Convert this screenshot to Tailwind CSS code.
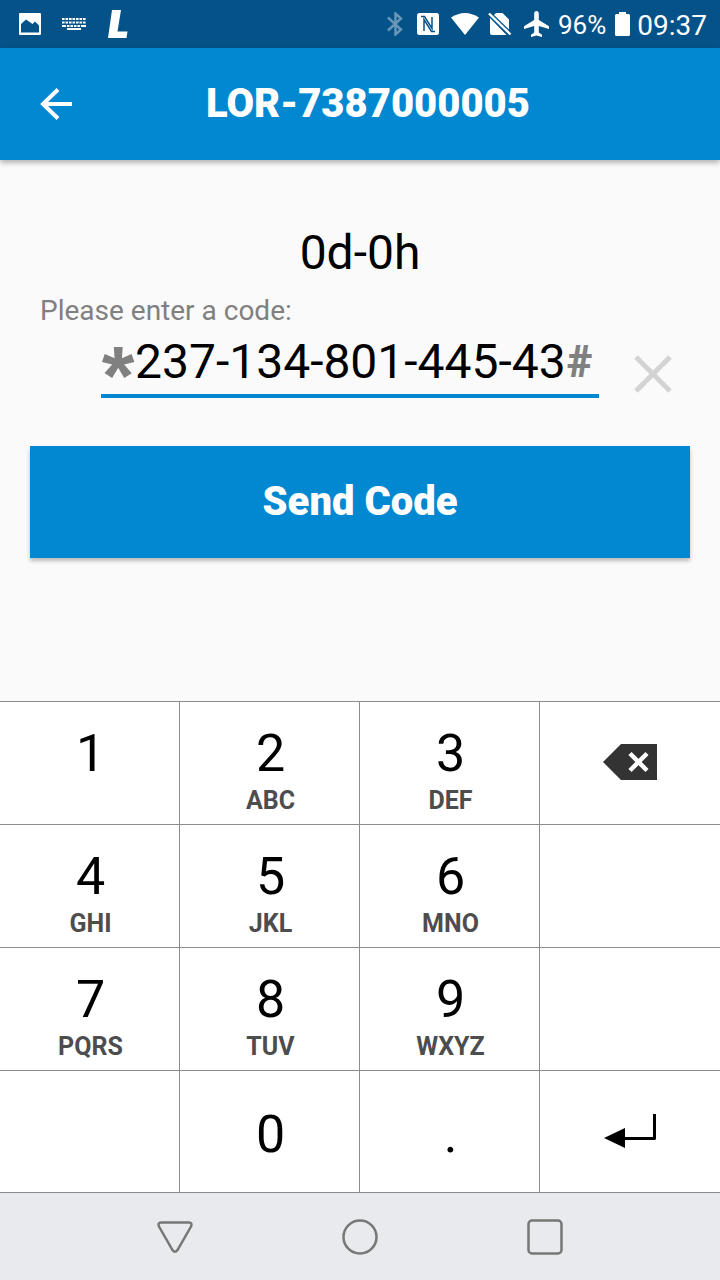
<!DOCTYPE html>
<html lang="en">
<head>
<meta charset="utf-8">
<meta name="viewport" content="width=device-width, initial-scale=1">
<title>LOR-7387000005</title>
<script src="https://cdn.jsdelivr.net/npm/@tailwindcss/browser@4"></script>
</head>
<body class="min-h-screen flex flex-col bg-[#fafafa] font-[Roboto,sans-serif] text-black">
  <div class="h-12 shrink-0 bg-[#055289] text-white flex items-center justify-between pl-[18px] pr-[13px]">
    <div class="flex items-center">
      <svg class="size-6" viewBox="0 0 24 24" fill="currentColor" aria-hidden="true"><path fill-rule="evenodd" d="M2 1h20a1 1 0 0 1 1 1v20a1 1 0 0 1-1 1H2a1 1 0 0 1-1-1V2a1 1 0 0 1 1-1zM3 12v8.500h18v-7l-4-4-2.500 2.500L8 7.500z"/></svg>
      <svg class="ml-5 w-6 h-6" viewBox="0 0 24 24" fill="none" stroke="currentColor" aria-hidden="true"><path stroke-width="2" stroke-dasharray="2.600 .9" d="M0 7h24M0 10.500h24"/><path stroke-width="2" stroke-dasharray="4 .9 2.600 .9 2.600 .9 2.600 .9 2.600 .9 5 0" d="M0 14h24"/><path stroke-width="2" d="M5 17h14"/></svg>
      <svg class="ml-[22px] w-5 h-7" viewBox="0 0 20 28" fill="currentColor" aria-hidden="true"><path d="M4 0h9L9.500 21.500h10L18.500 28H0z"/></svg>
    </div>
    <div class="flex items-center">
      <svg class="w-4 h-6 opacity-40" viewBox="0 0 16 24" fill="none" stroke="currentColor" stroke-width="2.400" aria-hidden="true"><path d="M1 5.500 14 17.500 8.500 22.500V1.500L14 6.500 1 18.500"/></svg>
      <svg class="ml-[14px] w-[22px] h-6" viewBox="0 0 22 24" aria-hidden="true"><rect y="1" width="22" height="22" rx="2.500" fill="currentColor"/><path d="M4 4.500h3.500l7.500 12V5M18 19.500h-3.500L7 7.500V19" fill="none" stroke="#055289" stroke-width="1.500"/></svg>
      <svg class="ml-3 w-7 h-6" viewBox="0 0 28 24" fill="currentColor" aria-hidden="true"><path d="M0 5.500Q14-3.500 28 5.500L14 23z"/></svg>
      <svg class="ml-[9px] w-6 h-6" viewBox="0 0 24 24" fill="currentColor" aria-hidden="true"><path d="M8 1h6.500L21 7.500v10L6 3zM2 6v15a2 2 0 0 0 2 2h14.500z"/><path d="M1 1.500 22.500 22.500" fill="none" stroke="currentColor" stroke-width="2.400"/></svg>
      <svg class="ml-3 w-[25px] h-[26px]" viewBox="0 0 25 26" fill="currentColor" aria-hidden="true"><path d="M12.500 0c1.400 0 2.300 1 2.300 2.400V9L25 15.300V18l-10.200-3v6.500l3.200 2.300V26l-5.500-1.500L7 26v-2.200l3.200-2.300V15L0 18v-2.700L10.200 9V2.400C10.200 1 11.100 0 12.500 0z"/></svg>
      <span class="ml-[9px] pt-[2px] text-[26px] leading-8">96%</span>
      <svg class="ml-[9px] w-[15px] h-6" viewBox="0 0 15 24" fill="currentColor" aria-hidden="true"><path d="M4 0h7v2h2.500A1.500 1.500 0 0 1 15 3.500v19a1.500 1.500 0 0 1-1.500 1.500h-12A1.500 1.500 0 0 1 0 22.500v-19A1.500 1.500 0 0 1 1.500 2H4z"/></svg>
      <span class="ml-[7px] pt-[3px] text-[28px] leading-8">09:37</span>
    </div>
  </div>

  <header class="h-28 shrink-0 bg-[#0288d1] text-white grid grid-cols-[112px_1fr_112px] items-center shadow-[0_3px_5px_rgba(0,0,0,0.28)]">
    <button type="button" aria-label="Back" class="h-28 grid place-items-center">
      <svg class="size-8" viewBox="0 0 32 32" fill="none" stroke="currentColor" stroke-width="4" aria-hidden="true"><path d="M32 16H4M18 1.500 3 16l15 14.500"/></svg>
    </button>
    <h1 class="text-center text-[40px] leading-12 font-black pl-4">LOR-7387000005</h1>
  </header>

  <main class="grow flex flex-col pt-[65px]">
    <p class="text-center text-5xl leading-14">0d-0h</p>
    <label for="code" class="mt-3 pl-10 text-[28px] leading-9 text-[#808080]">Please enter a code:</label>
    <div class="flex items-start">
      <div class="ml-[101px] grow min-w-0 flex items-center h-[69px] border-b-4 border-[#0288d1]">
        <span class="w-[34px] h-14 shrink-0 text-center font-['Liberation_Sans',sans-serif] text-[84px] leading-[84px] font-bold text-[#808080]">*</span>
        <input id="code" type="text" inputmode="numeric" value="237-134-801-445-43" class="grow min-w-0 h-14 p-0 text-5xl leading-14 bg-transparent outline-none">
        <span class="w-8 shrink-0 text-[44px] leading-14 font-black text-[#808080]">#</span>
      </div>
      <button type="button" aria-label="Clear code" class="ml-[34px] mr-[47px] mt-[25px] shrink-0">
        <svg class="size-10" viewBox="0 0 40 40" fill="none" stroke="#d3d3d3" stroke-width="5" aria-hidden="true"><path d="M3 3l34 34M37 3 3 37"/></svg>
      </button>
    </div>
    <button type="button" class="mx-[30px] mt-12 h-28 bg-[#0288d1] text-white text-[40px] leading-12 font-black shadow-[0_3px_4px_rgba(0,0,0,0.25)]">Send Code</button>
  </main>

  <section aria-label="Keypad" class="grid grid-cols-4 grid-rows-[123px_123px_123px_122px] bg-white border-b border-[#8c8c8c] text-[52px] leading-[60px] [&>*]:border-t [&>*]:border-r [&>*]:border-[#8c8c8c] [&>*:nth-child(4n)]:border-r-0 [&>button]:flex [&>button]:flex-col [&>button]:items-center [&>button]:pt-[22px] [&>button:not(:nth-child(4n))]:pl-[2px] [&_small]:text-[25px] [&_small]:leading-8 [&_small]:mt-px [&_small]:font-bold [&_small]:text-[#4d4d4d]">
    <button type="button">1</button>
    <button type="button">2<small>ABC</small></button>
    <button type="button">3<small>DEF</small></button>
    <button type="button" aria-label="Backspace"><svg class="mt-5 w-[54px] h-9" viewBox="0 0 54 36" aria-hidden="true"><path d="M0 18 18 0h36v36H18z" fill="#333"/><path d="M27 9.500l17 17M44 9.500l-17 17" stroke="#fff" stroke-width="4.500"/></svg></button>
    <button type="button">4<small>GHI</small></button>
    <button type="button">5<small>JKL</small></button>
    <button type="button">6<small>MNO</small></button>
    <div></div>
    <button type="button">7<small>PQRS</small></button>
    <button type="button">8<small>TUV</small></button>
    <button type="button">9<small>WXYZ</small></button>
    <div></div>
    <div></div>
    <button type="button"><span class="mt-3">0</span></button>
    <button type="button"><span class="mt-3">.</span></button>
    <button type="button" aria-label="Enter"><svg class="mt-5 w-[52px] h-9" viewBox="0 0 52 36" aria-hidden="true"><path d="M0 25 21 15v20z"/><path d="M20 25.500h30.500V1" fill="none" stroke="#000" stroke-width="3" stroke-linejoin="round"/></svg></button>
  </section>

  <nav class="h-[87px] shrink-0 bg-[#e9eaed] flex items-center justify-center gap-[149px] text-[#777] [&_svg]:size-9" aria-label="System">
    <button type="button" aria-label="Back"><svg viewBox="0 0 36 36" fill="none" stroke="currentColor" stroke-width="2.500" aria-hidden="true"><path d="M4 3.500h28q3.500 0 2 4L20.500 31q-2.500 3.500-5 0L2 7.500q-1.500-4 2-4z"/></svg></button>
    <button type="button" aria-label="Home"><svg viewBox="0 0 36 36" fill="none" stroke="currentColor" stroke-width="2.500" aria-hidden="true"><circle cx="18" cy="18" r="16.500"/></svg></button>
    <button type="button" aria-label="Recent apps"><svg viewBox="0 0 36 36" fill="none" stroke="currentColor" stroke-width="2.500" aria-hidden="true"><rect x="1.500" y="1.500" width="33" height="33" rx="3.500"/></svg></button>
  </nav>
</body>
</html>
